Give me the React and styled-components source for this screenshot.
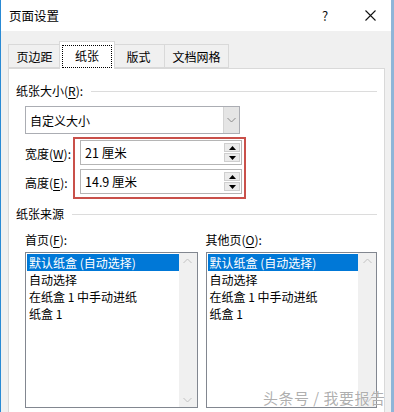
import React from 'react';
import styled, { createGlobalStyle } from 'styled-components';

const GlobalStyle = createGlobalStyle`
  html, body {
    margin: 0;
    padding: 0;
    background: #ffffff;
  }
  * {
    box-sizing: border-box;
  }
`

const Window = styled.div`
  position: relative;
  width: 394px;
  height: 412px;
  overflow: hidden;
  background: #f0f0f0;
  border-left: 1px solid #2a8ad4;
  border-right: 3px solid #8fb5d8;
  font-family: "Noto Sans CJK SC", "Microsoft YaHei", sans-serif;
  font-size: 12px;
  color: #000;
`

const TitleBar = styled.div`
  height: 31px;
  background: #ffffff;
  display: flex;
  align-items: center;
  padding-left: 8px;
`

const Title = styled.div`
  flex: 1;
  font-size: 12.5px;
  line-height: 16px;
`

const TitleButton = styled.div`
  width: ${({w}) => w}px;
  margin-right: ${({mr}) => mr || 0}px;
  display: flex;
  justify-content: center;
  align-items: center;
  font-size: 13px;
  color: #111;
`

const Body = styled.div`
  padding: 9px 7px 0 7px;
`

const TabRow = styled.div`
  display: flex;
  align-items: flex-end;
  height: 28px;
  position: relative;
  z-index: 1;
`

const Tab = styled.div`
  width: ${({w, active}) => active ? w + 4 : w}px;
  height: ${({active}) => active ? 28 : 24}px;
  margin: 0 ${({active}) => active ? -2 : 0}px;
  background: ${({active}) => active ? '#ffffff' : '#f0f0f0'};
  border: 1px solid #d9d9d9;
  border-bottom: ${({active}) => active ? 'none' : '1px solid #d9d9d9'};
  border-left: ${({first, active}) => first || active ? '1px solid #d9d9d9' : 'none'};
  display: flex;
  justify-content: center;
  align-items: center;
  padding-top: ${({active}) => active ? 1 : 0}px;
  position: relative;
  z-index: ${({active}) => active ? 2 : 1};
  margin-bottom: ${({active}) => active ? -1 : 0}px;
`

const FocusText = styled.span`
  outline: 1px dotted #000;
  outline-offset: 0;
  padding: 2px 12px 3px;
  line-height: 16px;
`

const Panel = styled.div`
  width: 377px;
  height: 360px;
  background: #ffffff;
  border: 1px solid #d9d9d9;
  padding: 0 7px 0 7px;
  display: flex;
  flex-direction: column;
`

const Heading = styled.div`
  display: flex;
  align-items: center;
  line-height: 16px;
  margin-top: ${({mt}) => mt}px;

  &::after {
    content: '';
    flex: 1;
    height: 1px;
    background: #dcdcdc;
    margin-left: 8px;
  }
`

const U = styled.span`
  text-decoration: underline;
  text-underline-offset: 2px;
`

const Indent = styled.div`
  margin-left: 9px;
`

const Select = styled.div`
  margin-top: 7px;
  width: 215px;
  height: 28px;
  border: 1px solid #abadb3;
  display: flex;
  align-items: stretch;
`

const SelectText = styled.div`
  flex: 1;
  padding-left: 4px;
  display: flex;
  align-items: center;
`

const SelectButton = styled.div`
  width: 16px;
  background: #e5e5e5;
  border-left: 1px solid #d4d4d4;
  display: flex;
  align-items: center;
  justify-content: center;
`

const SizeRow = styled.div`
  display: flex;
  margin-top: 3px;
  margin-left: -1px;
`

const LabelCol = styled.div`
  width: 49px;
  display: flex;
  flex-direction: column;
  padding-top: 4px;
  gap: 4px;
`

const FieldLabel = styled.div`
  height: 25px;
  display: flex;
  align-items: center;
  padding-left: 1px;
`

const Highlight = styled.div`
  width: 173px;
  border: 2px solid #c9504a;
  padding: 1px 2px 3px 5px;
  display: flex;
  flex-direction: column;
  gap: 4px;
`

const Input = styled.div`
  height: 25px;
  border: 1px solid #b5b5b5;
  display: flex;
  align-items: center;
  padding: 1px 1px 1px 4px;
`

const InputText = styled.div`
  flex: 1;
  font-size: 12.5px;
`

const Spin = styled.div`
  width: 16px;
  display: flex;
  flex-direction: column;
  gap: 1px;
  align-self: stretch;
  padding: 1px 0;
`

const SpinBtn = styled.div`
  flex: 1;
  background: #ebebeb;
  border: 1px solid #cfcfcf;
  display: flex;
  align-items: center;
  justify-content: center;
`

const SubLabel = styled.div`
  line-height: 16px;
  margin-top: 10px;
`

const Sources = styled.div`
  display: flex;
  gap: 8px;
`

const SourceCol = styled.div`
  width: ${({w}) => w}px;
  display: flex;
  flex-direction: column;
`

const ListBox = styled.div`
  margin-top: 4px;
  height: 156px;
  border: 1px solid #828790;
  display: flex;
`

const Items = styled.div`
  flex: 1;
  padding-top: 1px;
`

const Item = styled.div`
  height: 17px;
  line-height: 17px;
  padding-left: 2px;
  margin-left: 1px;
  white-space: nowrap;
  background: ${({selected}) => selected ? '#0078d7' : 'transparent'};
  color: ${({selected}) => selected ? '#ffffff' : '#000'};
`

const Scrollbar = styled.div`
  width: 18px;
  background: #f0f0f0;
  display: flex;
  flex-direction: column;
  justify-content: space-between;
  align-items: center;
  padding: 5px 0 4px;
`

const Watermark = styled.div`
  position: absolute;
  left: 262px;
  top: 389px;
  font-size: 15px;
  line-height: 18px;
  letter-spacing: 0.5px;
  color: rgba(140, 140, 140, 0.7);
  text-shadow: 0 0 1px #fff, 0 0 1px #fff;
  white-space: nowrap;
`

const Chevron = ({up, color = '#8a8a8a'}) => (
  <svg width="9" height="6" viewBox="0 0 9 6">
    <polyline
      points={up ? '0.5,5 4.5,1 8.5,5' : '0.5,1 4.5,5 8.5,1'}
      fill="none" stroke={color} strokeWidth="1"/>
  </svg>
)

const Tri = ({up}) => (
  <svg width="7" height="4" viewBox="0 0 7 4">
    <polygon points={up ? '0,4 3.5,0 7,4' : '0,0 3.5,4 7,0'} fill="#000"/>
  </svg>
)

const items = ['默认纸盒 (自动选择)', '自动选择', '在纸盒 1 中手动进纸', '纸盒 1']

const SourceList = ({label, width}) => (
  <SourceCol w={width}>
    <SubLabel>{label}</SubLabel>
    <ListBox>
      <Items>
        {items.map((t, i) => <Item key={t} selected={i === 0}>{t}</Item>)}
      </Items>
      <Scrollbar>
        <Chevron up color="#c2c2c2"/>
        <Chevron color="#c2c2c2"/>
      </Scrollbar>
    </ListBox>
  </SourceCol>
)

const App = () => {
  return (
    <Window>
      <GlobalStyle/>
      <TitleBar>
        <Title>页面设置</Title>
        <TitleButton w={24} mr={12}>?</TitleButton>
        <TitleButton w={42}>
          <svg width="11" height="11" viewBox="0 0 11 11">
            <path d="M0.5 0.5 L10.5 10.5 M10.5 0.5 L0.5 10.5" stroke="#111" strokeWidth="1.1"/>
          </svg>
        </TitleButton>
      </TitleBar>
      <Body>
        <TabRow>
          <Tab w={53} first>页边距</Tab>
          <Tab w={52} active><FocusText>纸张</FocusText></Tab>
          <Tab w={52}>版式</Tab>
          <Tab w={64}>文档网格</Tab>
        </TabRow>
        <Panel>
          <Heading mt={14}>纸张大小(<U>R</U>):</Heading>
          <Indent>
            <Select>
              <SelectText>自定义大小</SelectText>
              <SelectButton><Chevron/></SelectButton>
            </Select>
            <SizeRow>
              <LabelCol>
                <FieldLabel>宽度(<U>W</U>):</FieldLabel>
                <FieldLabel>高度(<U>E</U>):</FieldLabel>
              </LabelCol>
              <Highlight>
                <Input>
                  <InputText>21 厘米</InputText>
                  <Spin>
                    <SpinBtn><Tri up/></SpinBtn>
                    <SpinBtn><Tri/></SpinBtn>
                  </Spin>
                </Input>
                <Input>
                  <InputText>14.9 厘米</InputText>
                  <Spin>
                    <SpinBtn><Tri up/></SpinBtn>
                    <SpinBtn><Tri/></SpinBtn>
                  </Spin>
                </Input>
              </Highlight>
            </SizeRow>
          </Indent>
          <Heading mt={7}>纸张来源</Heading>
          <Indent>
            <Sources>
              <SourceList label={<>首页(<U>F</U>):</>} width={173}/>
              <SourceList label={<>其他页(<U>O</U>):</>} width={172}/>
            </Sources>
          </Indent>
        </Panel>
      </Body>
      <Watermark>头条号 / 我要报告</Watermark>
    </Window>
  )
}

export default App
